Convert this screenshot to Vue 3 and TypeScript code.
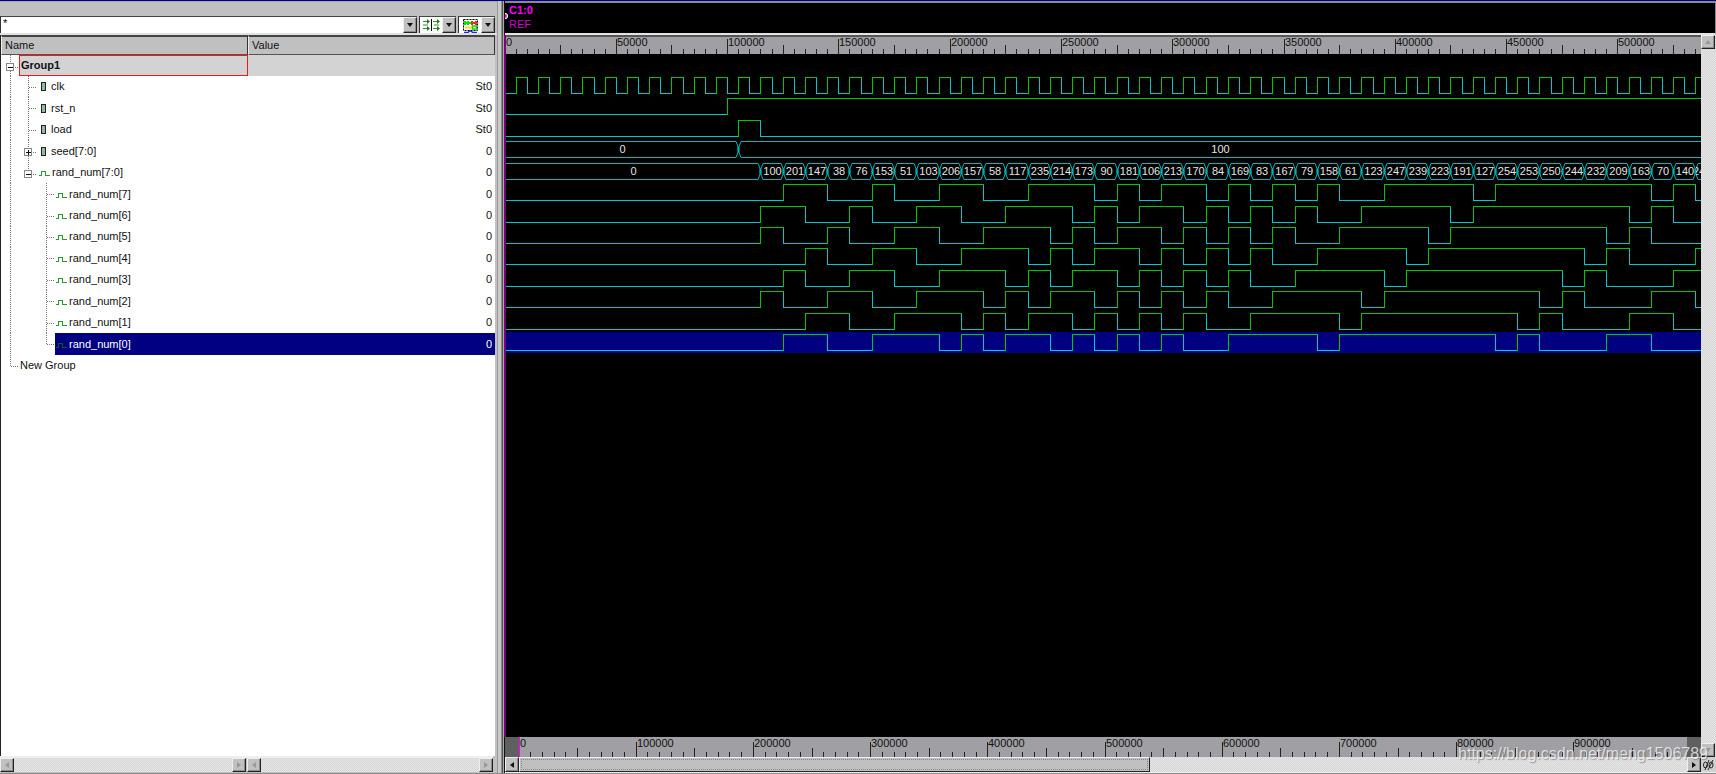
<script setup lang="ts">
import { computed, onBeforeUnmount, onMounted, ref } from 'vue'

interface Signal {
  name: string
  value: string
  depth: number
  kind: 'group' | 'input' | 'output' | 'none'
  box?: 'plus' | 'minus'
  last?: boolean
}

const signals: Signal[] = [
  { name: 'Group1', value: '', depth: 0, kind: 'group', box: 'minus' },
  { name: 'clk', value: 'St0', depth: 1, kind: 'input' },
  { name: 'rst_n', value: 'St0', depth: 1, kind: 'input' },
  { name: 'load', value: 'St0', depth: 1, kind: 'input' },
  { name: 'seed[7:0]', value: '0', depth: 1, kind: 'input', box: 'plus' },
  { name: 'rand_num[7:0]', value: '0', depth: 1, kind: 'output', box: 'minus', last: true },
  ...[7, 6, 5, 4, 3, 2, 1, 0].map((b): Signal => ({
    name: `rand_num[${b}]`, value: '0', depth: 2, kind: 'output', last: b === 0,
  })),
  { name: 'New Group', value: '', depth: 0, kind: 'none', last: true },
]
const selected = 13

const rowTop = (i: number) => Math.floor((i * 150) / 7)
const rowHeight = (i: number) => rowTop(i + 1) - rowTop(i)
const guideWidth = (s: Signal) => (s.kind === 'none' ? 20 : [19, 38, 55][s.depth])
const lineX = (depth: number) => 10 + depth * 18

/* horizontal scale of the wave view */
const UNIT = 10000
const PX = 22.258
const END = 550000
const xAt = (t: number) => Math.floor((t / UNIT) * PX)

const waveBox = ref<HTMLElement | null>(null)
const viewWidth = ref(1196)
let observer: ResizeObserver | undefined
onMounted(() => {
  observer = new ResizeObserver(() => {
    if (waveBox.value) viewWidth.value = waveBox.value.clientWidth
  })
  if (waveBox.value) observer.observe(waveBox.value)
})
onBeforeUnmount(() => observer?.disconnect())

const words = [
  100, 201, 147, 38, 76, 153, 51, 103, 206, 157, 58, 117, 235, 214, 173, 90, 181, 106, 213, 170, 84,
  169, 83, 167, 79, 158, 61, 123, 247, 239, 223, 191, 127, 254, 253, 250, 244, 232, 209, 163, 70,
  140, 24,
]
type Edge = [number, number]
const bitEdges = (b: number): Edge[] => {
  const out: Edge[] = [[0, 0]]
  words.forEach((w, i) => {
    const v = (w >> b) & 1
    if (v !== out[out.length - 1][1]) out.push([115000 + i * UNIT, v])
  })
  return out
}
const clk: Edge[] = Array.from({ length: 110 }, (_, i): Edge => [i * 5000, i % 2])

const trace = (row: number, edges: Edge[]) => {
  const hi = rowTop(row) + 2.5
  const lo = hi + 16
  let high = ''
  let low = ''
  edges.forEach(([t, v], i) => {
    const x = xAt(t) + (i ? 0.5 : 0)
    const next = xAt(i + 1 < edges.length ? edges[i + 1][0] : END) + 0.5
    const y = v ? hi : lo
    let d = `M${x} ${y}H${next}`
    if (i) d = `M${x} ${v ? lo : hi}V${y}H${next}`
    if (v) high += d
    else low += d
  })
  return { high, low }
}
const traces = [
  trace(1, clk),
  trace(2, [[0, 0], [100000, 1]]),
  trace(3, [[0, 0], [105000, 1], [115000, 0]]),
  ...[7, 6, 5, 4, 3, 2, 1, 0].map((b, i) => trace(6 + i, bitEdges(b))),
]

const bus = (row: number, times: number[], values: number[]) => {
  const hi = rowTop(row) + 2.5
  const lo = hi + 16
  let d = ''
  times.forEach((t, i) => {
    const a = i ? xAt(t) + 3 : 0
    const b = xAt(times[i + 1] ?? END) - 2
    d += `M${a} ${hi}H${b}M${a} ${lo}H${b}`
    if (i) d += `M${a - 5} ${hi}l2 5v6l-2 5M${a} ${hi}l-2 5v6l2 5M${a - 3} ${hi + 5}l1 3l-1 3M${a - 2} ${hi + 5}l-1 3l1 3`
  })
  const labels = values.map((v, i) => {
    const start = xAt(times[i])
    const end = Math.min(xAt(times[i + 1] ?? END), viewWidth.value)
    return { text: String(v), x: start + 1, y: hi, width: Math.max(end - start, 0) }
  })
  return { d, labels }
}
const buses = computed(() => [
  bus(4, [0, 105000], [0, 100]),
  bus(5, [0, ...words.map((_, i) => 115000 + i * UNIT)], [0, ...words]),
])

const ticks = (count: number, step: number, offset: number, labelStep: number) =>
  Array.from({ length: count }, (_, i) => ({
    x: offset + Math.floor(i * step),
    size: i % 10 === 0 ? 0 : i % 5 === 0 ? 1 : 2,
    label: i % 10 === 0 ? String((i / 10) * labelStep) : '',
  }))
const topTicks = ticks(108, PX / 2, 0, 50000)
const lowTicks = ticks(100, 11.72, 14, 100000)
const tickY = [2, 8, 12]
const lowTickY = [5, 11, 15]
</script>

<template>
  <div class="viewer">
    <section class="signals">
      <div class="toolbar">
        <div class="combo filter">
          <input type="text" value="*" aria-label="Signal filter" />
          <button type="button" aria-label="Filter history"><i class="down"></i></button>
        </div>
        <div class="combo tool">
          <button type="button" class="face" aria-label="Any edge">
            <svg width="20" height="14" viewBox="0 0 20 14">
              <path d="M2 3.500h6M2 10.500h6M12 3.500h6M12 10.500h6M2 7h5M13 7h5" stroke="#2f8f2f" fill="none" />
              <path d="M6 1l3 2.500-3 2.500zM6 8l3 2.500-3 2.500zM16 1l3 2.500-3 2.500zM16 8l3 2.500-3 2.500z" fill="#178217" />
              <path d="M10.500 1v12" stroke="#000" />
            </svg>
          </button>
          <button type="button" aria-label="Edge type"><i class="down"></i></button>
        </div>
        <div class="combo tool">
          <button type="button" class="face" aria-label="Bus tracing">
            <svg width="20" height="15" viewBox="0 0 20 15">
              <rect x="3.500" y="1.500" width="14" height="11" fill="none" stroke="#000" stroke-dasharray="2 1" />
              <path d="M4 5h7M5 3v4M8 3v4" stroke="#00e800" stroke-width="2" />
              <path d="M11 5h6M12 3v4M16 3v4" stroke="#f22" stroke-width="2" />
              <path d="M5 9.500h7" stroke="#f2e400" stroke-width="2" />
              <rect x="12.500" y="8" width="4" height="3" fill="none" stroke="#0d0" stroke-width="1.500" />
              <path d="M4 14.500h4l2-2 3 2h4" stroke="#22f" fill="none" stroke-width="1.500" />
            </svg>
          </button>
          <button type="button" aria-label="Tracing options"><i class="down"></i></button>
        </div>
      </div>
      <div class="list">
        <table>
          <colgroup><col /><col /></colgroup>
          <thead>
            <tr><th scope="col">Name</th><th scope="col">Value</th></tr>
          </thead>
          <tbody>
            <tr
              v-for="(s, i) in signals"
              :key="s.name"
              :class="{ group: s.kind === 'group', selected: i === selected }"
              :style="{ height: rowHeight(i) + 'px' }"
            >
              <td>
                <div class="name" :style="{ height: rowHeight(i) + 'px' }">
                  <svg class="guide" :width="guideWidth(s)" height="22">
                    <g stroke="#777" stroke-dasharray="1 1">
                      <path :d="`M10.500 0V${s.kind === 'none' ? 11 : 22}`" />
                      <path v-if="s.depth === 1" :d="`M28.500 0V${s.last ? 12 : 22}`" />
                      <path v-if="s.depth === 2" :d="`M46.500 0V${s.last ? 11 : 22}`" />
                      <path :d="`M${lineX(s.depth) + 1} ${s.box ? 12.5 : 11.5}H${lineX(s.depth) + 8}`" />
                    </g>
                    <g v-if="s.box" fill="#fff" stroke="#888" shape-rendering="crispEdges">
                      <rect :x="lineX(s.depth) - 3.5" y="8.500" width="7" height="7" />
                      <path :d="`M${lineX(s.depth) - 2} 12.500h5`" stroke="#111" />
                      <path v-if="s.box === 'plus'" :d="`M${lineX(s.depth) + 0.5} 10v5`" stroke="#111" />
                    </g>
                  </svg>
                  <span class="label">
                    <svg v-if="s.kind === 'input'" width="13" height="14">
                      <rect x="3.500" y="3.500" width="4" height="8" fill="#8fbc9f" stroke="#222" />
                    </svg>
                    <svg v-if="s.kind === 'output'" width="14" height="14" shape-rendering="crispEdges">
                      <path
                        d="M1 10.500h2.500v-4h4v4h4.500"
                        fill="none"
                        :stroke="i === selected ? '#0a5a1a' : '#1f9f2f'"
                      />
                    </svg>
                    <span>{{ s.name }}</span>
                  </span>
                </div>
              </td>
              <td class="value">{{ s.value }}</td>
            </tr>
          </tbody>
        </table>
      </div>
      <div class="bars">
        <div class="bar">
          <button type="button" aria-label="Scroll names left"><i class="left dim"></i></button>
          <button type="button" aria-label="Scroll names right"><i class="right dim"></i></button>
        </div>
        <div class="bar">
          <button type="button" aria-label="Scroll values left"><i class="left dim"></i></button>
          <button type="button" aria-label="Scroll values right"><i class="right dim"></i></button>
        </div>
      </div>
    </section>

    <div class="divider"></div>

    <section class="waves">
      <div class="markers">
        <strong>C1:0</strong>
        <span>REF</span>
        <i class="knob"></i>
      </div>
      <div class="middle">
        <div ref="waveBox" class="canvas">
          <svg class="ruler" height="17">
            <path v-for="t in topTicks" :key="t.x" :d="`M${t.x + 0.5} ${tickY[t.size]}V17`" />
            <text v-for="t in topTicks.filter((k) => k.label)" :key="t.x" :x="t.x + 1" y="9">{{ t.label }}</text>
          </svg>
          <div class="plot">
            <svg class="field">
              <rect x="0" :y="rowTop(selected)" width="100%" height="21" fill="#000080" />
              <g fill="none" shape-rendering="crispEdges">
                <template v-for="(t, i) in traces" :key="i">
                  <path :d="t.low" stroke="#00c8cc" />
                  <path :d="t.high" stroke="#00c800" />
                </template>
              </g>
              <g v-for="(b, i) in buses" :key="i">
                <path :d="b.d" fill="none" stroke="#00b8bc" />
                <svg v-for="(l, k) in b.labels" :key="k" :x="l.x" :y="l.y" :width="l.width" height="16">
                  <text x="50%" y="11">{{ l.text }}</text>
                </svg>
              </g>
            </svg>
          </div>
          <i class="cursor"></i>
          <svg class="overview" height="20">
            <rect width="14" height="20" fill="#606060" />
            <path v-for="t in lowTicks" :key="t.x" :d="`M${t.x + 0.5} ${lowTickY[t.size]}V20`" />
            <path d="M14.500 0V20" class="zero" />
            <svg x="100%" overflow="visible"><rect x="-14" width="14" height="20" fill="#606060" /></svg>
            <text v-for="t in lowTicks.filter((k) => k.label)" :key="t.x" :x="t.x + 1" y="10">{{ t.label }}</text>
          </svg>
        </div>
        <div class="vbar">
          <button type="button" aria-label="Scroll up"><i class="up dim"></i></button>
          <button type="button" aria-label="Scroll down"><i class="down dim"></i></button>
        </div>
      </div>
      <div class="bottom">
        <div class="bar wide">
          <button type="button" aria-label="Scroll back"><i class="left"></i></button>
          <div class="track"><div class="thumb"></div></div>
          <button type="button" aria-label="Scroll forward"><i class="right"></i></button>
        </div>
        <button type="button" class="percent" aria-label="Zoom to fit">
          <svg width="13" height="12" viewBox="0 0 13 12" fill="none" stroke="#222">
            <ellipse cx="3.500" cy="6" rx="2" ry="3" /><ellipse cx="9" cy="6" rx="2" ry="3" />
            <path d="M3 11L7 1M6 11L11 1" />
          </svg>
        </button>
      </div>
    </section>

    <div class="watermark">https://blog.csdn.net/meng1506789</div>
  </div>
</template>

<style>
html,
body {
  margin: 0;
  background: #c0c0c0;
}
</style>

<style scoped>
.viewer {
  position: relative;
  box-sizing: border-box;
  display: grid;
  grid-template-columns: minmax(280px, 497px) 8px minmax(0, 1fr);
  height: 100vh;
  min-height: 460px;
  border-top: 1px solid #00007c;
  border-bottom: 1px solid #8a8a8a;
  background: #c0c0c0;
  font-family: "Liberation Sans", Arial, sans-serif;
  font-size: 11px;
  color: #111;
  overflow: hidden;
}
svg {
  display: block;
}
button {
  box-sizing: border-box;
  display: flex;
  align-items: center;
  justify-content: center;
  flex: none;
  width: 14px;
  padding: 0;
  border: 1px solid;
  border-color: #eee #222 #222 #eee;
  background: #c0c0c0;
  box-shadow: inset -1px -1px #8c8c8c;
}
i {
  display: block;
}
.down,
.up,
.left,
.right {
  width: 0;
  height: 0;
  border: 3px solid transparent;
}
.down {
  border-top: 4px solid #111;
  border-bottom: 0;
}
.up {
  border-bottom: 4px solid #111;
  border-top: 0;
}
.left {
  border-right: 4px solid #111;
  border-left: 0;
}
.right {
  border-left: 4px solid #111;
  border-right: 0;
}
.down.dim {
  border-top-color: #999;
}
.up.dim {
  border-bottom-color: #999;
}
.left.dim {
  border-right-color: #999;
}
.right.dim {
  border-left-color: #999;
}

.signals {
  display: flex;
  flex-direction: column;
  min-width: 0;
}
.toolbar {
  display: flex;
  gap: 2px;
  padding: 14px 2px 0 0;
  border-top: 1px solid #a4a4b4;
  border-bottom: 2px solid #e2e2e2;
}
.combo {
  box-sizing: border-box;
  display: flex;
  height: 17px;
  border-top: 1px solid #444;
  border-left: 1px solid #333;
  background: #fff;
}
.filter {
  flex: 1;
  min-width: 0;
}
.filter input {
  flex: 1;
  min-width: 0;
  padding: 0 2px 4px;
  border: 0;
  background: none;
  font: inherit;
  outline: 0;
}
.tool {
  width: 37px;
}
.face {
  flex: 1;
  border: 0;
  background: none;
  box-shadow: none;
}
.list {
  flex: 1;
  min-height: 0;
  overflow: hidden;
  margin-right: 2px;
  border-left: 1px solid #222;
  background: #fff;
}
table {
  width: 100%;
  border-collapse: separate;
  border-spacing: 0;
  table-layout: fixed;
}
th {
  box-sizing: border-box;
  height: 20px;
  padding: 0 3px 1px;
  border: 1px solid;
  border-color: #444 #333 #555 #eee;
  border-top-width: 2px;
  background: #c0c0c0;
  font-weight: normal;
  text-align: left;
  line-height: 14px;
}
td {
  padding: 0;
  line-height: 20px;
}
.name {
  display: flex;
  margin-left: -1px;
}
.guide {
  flex: none;
}
.label {
  box-sizing: border-box;
  flex: 1;
  display: flex;
  align-items: center;
  min-width: 0;
  padding-bottom: 1px;
  white-space: nowrap;
}
.value {
  padding: 0 3px 1px 0;
  text-align: right;
}
.group td {
  background: #d3d3d3;
  font-weight: bold;
  line-height: 18px;
}
.group .guide {
  background: #fff;
}
.group .label {
  padding: 0 0 2px 1px;
  border: 1px solid #f01818;
}
.selected .label,
.selected .value {
  background: #000080;
  color: #fff;
}
.bars {
  display: grid;
  grid-template-columns: 1fr 1fr;
  gap: 1px;
  margin-right: 4px;
  height: 14px;
  border-top: 2px solid #eee;
  padding-bottom: 1px;
}
.bar {
  display: flex;
  justify-content: space-between;
  min-width: 0;
  background: repeating-conic-gradient(#d6d6d6 0 25%, #e6e6e6 0 50%) 0 0 / 2px 2px;
}

.divider {
  background: linear-gradient(
    to right,
    #999 0 1px,
    #cacaca 1px 4px,
    #8a8a8a 4px 5px,
    #555 5px 6px,
    #aaa 6px 7px,
    #111 7px 8px
  );
}

.waves {
  display: flex;
  flex-direction: column;
  min-width: 0;
}
.markers {
  position: relative;
  box-sizing: border-box;
  display: flex;
  flex-direction: column;
  height: 34px;
  padding: 0 4px;
  border-top: 2px solid #8a8a98;
  border-bottom: 2px solid #e4e4e4;
  border-right: 1px solid #8a8a98;
  background: #000;
  color: #f0f;
}
.markers strong,
.markers span {
  line-height: 14px;
}
.markers span {
  color: #d000d0;
}
.knob {
  position: absolute;
  left: 0;
  top: 10px;
  width: 2px;
  height: 4px;
  border-radius: 0 3px 3px 0;
  border: 1px solid #fff;
  border-left: 0;
  background: #f0f;
}
.middle {
  flex: 1;
  min-height: 0;
  display: flex;
}
.canvas {
  position: relative;
  flex: 1;
  min-width: 0;
  display: flex;
  flex-direction: column;
  background: #000;
}
.ruler,
.overview {
  flex: none;
  width: 100%;
  background: #a09fa4;
}
.ruler {
  border-top: 2px solid #555;
}
.overview {
  position: relative;
}
.ruler path,
.overview path {
  stroke: #222;
}
.overview .zero {
  stroke: #f0f;
}
.ruler text,
.overview text {
  fill: #111;
}
.plot {
  flex: 1;
  min-height: 0;
}
.field {
  width: 100%;
  height: 100%;
}
.field text {
  fill: #e4e4e4;
  text-anchor: middle;
}
.cursor {
  position: absolute;
  top: 0;
  bottom: 20px;
  left: -1px;
  width: 2px;
  background: #7d007d;
}
.vbar {
  flex: none;
  width: 15px;
  display: flex;
  flex-direction: column;
  justify-content: space-between;
  background: repeating-conic-gradient(#d6d6d6 0 25%, #e6e6e6 0 50%) 0 0 / 2px 2px;
}
.vbar button {
  width: 14px;
  height: 14px;
}
.bottom {
  display: flex;
  height: 15px;
  border-bottom: 1px solid #eee;
}
.wide {
  flex: 1;
}
.track {
  flex: 1;
  min-width: 0;
}
.thumb {
  box-sizing: border-box;
  width: 54%;
  height: 15px;
  border: 1px solid;
  border-color: #eee #222 #222 #eee;
  background: #c0c0c0;
  outline: 1px dotted #888;
  outline-offset: -3px;
}
.percent {
  width: 15px;
  border: 0;
  background: #d0d0d0;
  box-shadow: none;
}
.watermark {
  position: absolute;
  right: 8px;
  bottom: 9px;
  font-size: 16px;
  line-height: 20px;
  color: rgba(255, 255, 255, 0.72);
  text-shadow: 1px 1px 1px rgba(80, 80, 80, 0.5);
  pointer-events: none;
}
</style>
